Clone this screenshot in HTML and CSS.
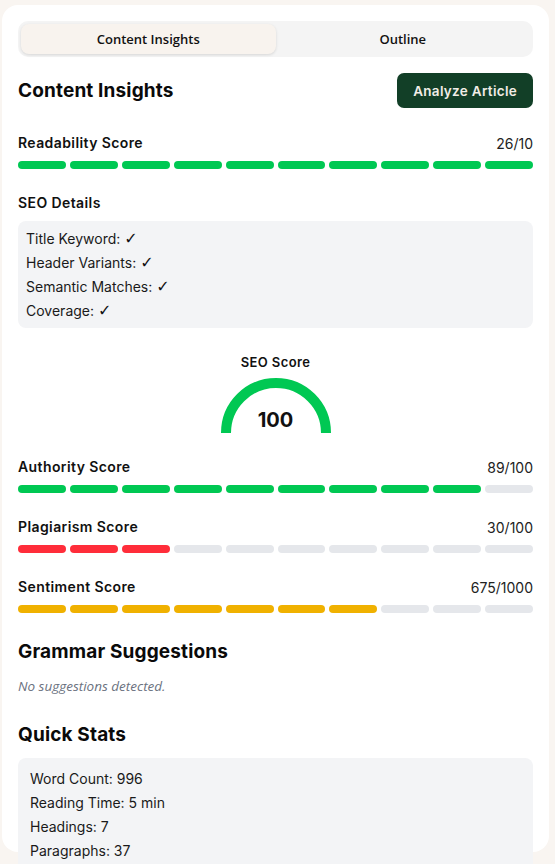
FILE: index.html
```html
<!DOCTYPE html>
<html lang="en">
<head>
<meta charset="utf-8">
<title>Content Insights</title>
<link rel="stylesheet" href="styles.css">
</head>
<body>
<div class="card">
  <div class="tabs">
    <div class="tab active">Content Insights</div>
    <div class="tab">Outline</div>
  </div>

  <div class="header-row">
    <h2 class="title">Content Insights</h2>
    <button class="analyze">Analyze Article</button>
  </div>

  <div class="metric first">
    <div class="metric-head"><span class="label">Readability Score</span><span class="value">26/10</span></div>
    <div class="segments">
      <span class="seg green"></span><span class="seg green"></span><span class="seg green"></span><span class="seg green"></span><span class="seg green"></span><span class="seg green"></span><span class="seg green"></span><span class="seg green"></span><span class="seg green"></span><span class="seg green"></span>
    </div>
  </div>

  <div class="section">
    <div class="label">SEO Details</div>
    <ul class="detail-box seo-box">
      <li>Title Keyword: <span class="check">✓</span></li>
      <li>Header Variants: <span class="check">✓</span></li>
      <li>Semantic Matches: <span class="check">✓</span></li>
      <li>Coverage: <span class="check">✓</span></li>
    </ul>
  </div>

  <div class="seo-score">
    <div class="label small">SEO Score</div>
    <div class="gauge">
      <svg width="110" height="55" viewBox="0 0 110 55" aria-hidden="true">
        <path d="M5 55 A50 50 0 0 1 105 55" fill="none" stroke="#00c853" stroke-width="10"/>
      </svg>
      <span class="gauge-value">100</span>
    </div>
  </div>

  <div class="metric">
    <div class="metric-head"><span class="label">Authority Score</span><span class="value">89/100</span></div>
    <div class="segments">
      <span class="seg green"></span><span class="seg green"></span><span class="seg green"></span><span class="seg green"></span><span class="seg green"></span><span class="seg green"></span><span class="seg green"></span><span class="seg green"></span><span class="seg green"></span><span class="seg"></span>
    </div>
  </div>

  <div class="metric">
    <div class="metric-head"><span class="label">Plagiarism Score</span><span class="value">30/100</span></div>
    <div class="segments">
      <span class="seg red"></span><span class="seg red"></span><span class="seg red"></span><span class="seg"></span><span class="seg"></span><span class="seg"></span><span class="seg"></span><span class="seg"></span><span class="seg"></span><span class="seg"></span>
    </div>
  </div>

  <div class="metric">
    <div class="metric-head"><span class="label">Sentiment Score</span><span class="value">675/1000</span></div>
    <div class="segments">
      <span class="seg yellow"></span><span class="seg yellow"></span><span class="seg yellow"></span><span class="seg yellow"></span><span class="seg yellow"></span><span class="seg yellow"></span><span class="seg yellow"></span><span class="seg"></span><span class="seg"></span><span class="seg"></span>
    </div>
  </div>

  <h2 class="title section-title grammar">Grammar Suggestions</h2>
  <p class="empty">No suggestions detected.</p>

  <h2 class="title section-title stats">Quick Stats</h2>
  <ul class="detail-box stats-box">
    <li>Word Count: 996</li>
    <li>Reading Time: 5 min</li>
    <li>Headings: 7</li>
    <li>Paragraphs: 37</li>
  </ul>
</div>
</body>
</html>
```

FILE: styles.css
```css
* { box-sizing: border-box; }

html, body {
  margin: 0;
  padding: 0;
  height: 864px;
  overflow: hidden;
}

body {
  background: #f9f5f1;
  font-family: "Inter", "Liberation Sans", sans-serif;
  color: #111111;
  padding: 5px 6px 0 2px;
}

.card {
  background: #ffffff;
  border-radius: 16px;
  padding: 16px;
  height: 847px;
  overflow: visible;
}

.tabs {
  display: flex;
  background: #f4f4f4;
  border-radius: 10px;
  padding: 3px;
  height: 36px;
}

.tab {
  flex: 1;
  display: flex;
  align-items: center;
  justify-content: center;
  font-family: "Open Sans", "Liberation Sans", sans-serif;
  font-weight: 600;
  font-size: 13px;
  color: #111111;
  border-radius: 8px;
}

.tab.active {
  background: #f8f3ee;
  box-shadow: 0 1px 3px rgba(0, 0, 0, 0.12);
}

.header-row {
  display: flex;
  justify-content: space-between;
  align-items: center;
  margin-top: 16px;
  height: 35px;
}

.title {
  margin: 0;
  font-family: "Inter", "Liberation Sans", sans-serif;
  font-weight: 700;
  font-size: 19px;
  letter-spacing: 0.15px;
  line-height: 28px;
  color: #0a0a0a;
}

.analyze {
  height: 35px;
  padding: 0 16px;
  border: none;
  border-radius: 7px;
  background: #123f27;
  color: #f1ede6;
  font-family: "Inter", "Liberation Sans", sans-serif;
  font-weight: 600;
  font-size: 13.5px;
  letter-spacing: 0.3px;
}

.label {
  font-family: "Inter", "Liberation Sans", sans-serif;
  font-weight: 600;
  font-size: 14px;
  letter-spacing: 0.4px;
  line-height: 20px;
  color: #111111;
}

.label.small { font-size: 13px; }

.metric { margin-top: 24px; }
.metric.first { margin-top: 25px; }

.metric-head {
  display: flex;
  justify-content: space-between;
  align-items: center;
  height: 20px;
}

.value {
  font-size: 14px;
  color: #222222;
}

.segments {
  display: flex;
  gap: 4px;
  margin-top: 8px;
}

.seg {
  flex: 1;
  height: 8px;
  border-radius: 4px;
  background: #e5e7eb;
}

.seg.green { background: #00c853; }
.seg.red { background: #ff2d3a; }
.seg.yellow { background: #f0b100; }

.section { margin-top: 24px; }

.detail-box {
  list-style: none;
  margin: 8px 0 0;
  background: #f3f4f6;
  border-radius: 8px;
  font-size: 14px;
  line-height: 24px;
  color: #1a1a1a;
}

.check {
  font-family: "DejaVu Sans", sans-serif;
  font-weight: 700;
  font-size: 16px;
  line-height: 1;
  color: #111111;
}

.seo-box { padding: 6px 8px 5px; }

.stats-box { padding: 9px 12px; margin-top: 9px; }

.seo-score {
  margin-top: 24px;
  display: flex;
  flex-direction: column;
  align-items: center;
}

.gauge {
  display: grid;
  margin-top: 6px;
}

.gauge svg,
.gauge-value {
  grid-area: 1 / 1;
}

.gauge svg { display: block; }

.gauge-value {
  align-self: end;
  justify-self: center;
  font-weight: 700;
  font-size: 20px;
  line-height: 24px;
  margin-bottom: 1px;
  color: #111111;
}

.section-title.grammar { margin-top: 25px; }
.section-title.stats { margin-top: 25px; }

.empty {
  margin: 10px 0 0;
  font-family: "Open Sans", "Liberation Sans", sans-serif;
  font-style: italic;
  font-size: 13.5px;
  line-height: 20px;
  color: #6b7280;
}
```
